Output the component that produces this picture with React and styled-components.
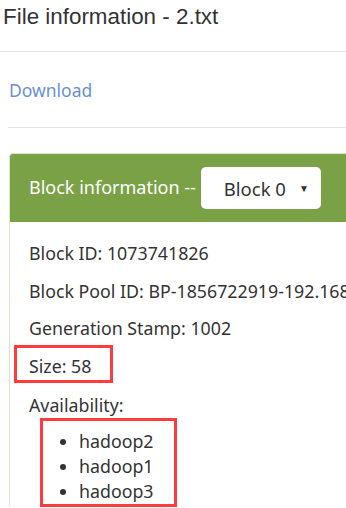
import styled, { createGlobalStyle } from 'styled-components';

const Global = createGlobalStyle`
  body {
    margin: 0;
    background: #fff;
    font-family: 'Noto Sans', 'Open Sans', sans-serif;
    color: #333;
    overflow: hidden;
  }
`;

const Page = styled.div`
  width: 346px;
  height: 508px;
  overflow: hidden;
`;

const Title = styled.h1`
  margin: 0;
  padding: 2px 0 0 3px;
  height: 51px;
  box-sizing: border-box;
  font-family: 'Liberation Sans', Arial, sans-serif;
  font-size: 22.4px;
  font-weight: normal;
  line-height: 30px;
  color: #333;
  white-space: nowrap;
`;

const Rule = styled.hr`
  margin: 0 0 0 ${({ indent }) => indent || 0}px;
  border: 0;
  border-top: 1px solid #e3e3e3;
`;

const LinkRow = styled.div`
  height: 75px;
  display: flex;
  align-items: center;
  padding-left: 9px;
`;

const DownloadLink = styled.a`
  color: #6b8fd3;
  font-size: 17.5px;
  text-decoration: none;
`;

const Panel = styled.section`
  margin: 25px 0 0 9px;
  border: 1px solid #d6e9c6;
  border-right: 0;
  border-bottom: 0;
  border-radius: 4px 0 0 0;
`;

const PanelHeader = styled.div`
  height: 68px;
  box-sizing: border-box;
  background: #7aa146;
  display: flex;
  align-items: center;
  padding: 0 0 2px 19px;
  color: #fff;
  font-size: 18px;
  white-space: nowrap;
  border-radius: 3px 0 0 0;
`;

const Select = styled.div`
  margin: 2px 0 0 5px;
  width: 120px;
  height: 42px;
  flex-shrink: 0;
  box-sizing: border-box;
  background: #fff;
  border-radius: 5px;
  display: flex;
  align-items: center;
  padding: 0 12px 0 23px;
  color: #333;
  font-size: 18.5px;
`;

const SelectLabel = styled.span`
  flex: 1;
`;

const Caret = styled.span`
  font-size: 10px;
  color: #333;
`;

const PanelBody = styled.div`
  padding: 13px 0 0 19px;
`;

const Field = styled.div`
  height: 37.5px;
  line-height: 37.5px;
  font-size: 17.8px;
  white-space: nowrap;
`;

const Marked = styled.div`
  border: 3px solid #ff3b3b;
  box-sizing: border-box;
  width: ${({ w }) => w}px;
  margin: ${({ top }) => top || 0}px 0 0 ${({ left }) => left}px;
  padding-left: ${({ pad }) => pad}px;
`;

const SizeField = styled(Field)`
  height: 32px;
  line-height: 36px;
`;

const LabelField = styled(Field)`
  height: 35px;
  line-height: 44px;
`;

const NodeList = styled.ul`
  margin: 0;
  padding: 8px 0 0 36px;
  font-size: 17.8px;
  line-height: 25px;
`;

export default function App() {
  const nodes = ['hadoop2', 'hadoop1', 'hadoop3'];
  return (
    <Page>
      <Global />
      <Title>File information - 2.txt</Title>
      <Rule />
      <LinkRow>
        <DownloadLink href="#">Download</DownloadLink>
      </LinkRow>
      <Rule indent={8} />
      <Panel>
        <PanelHeader>
          Block information --
          <Select>
            <SelectLabel>Block 0</SelectLabel>
            <Caret>▼</Caret>
          </Select>
        </PanelHeader>
        <PanelBody>
          <Field>Block ID: 1073741826</Field>
          <Field>Block Pool ID: BP-1856722919-192.168.10.102-1611911781467</Field>
          <Field>Generation Stamp: 1002</Field>
          <Marked w={99} top={-2.5} left={-15} pad={12}>
            <SizeField>Size: 58</SizeField>
          </Marked>
          <LabelField>Availability:</LabelField>
          <Marked w={137} left={11} pad={0}>
            <NodeList>
              {nodes.map((n) => (
                <li key={n}>{n}</li>
              ))}
            </NodeList>
          </Marked>
        </PanelBody>
      </Panel>
    </Page>
  );
}
